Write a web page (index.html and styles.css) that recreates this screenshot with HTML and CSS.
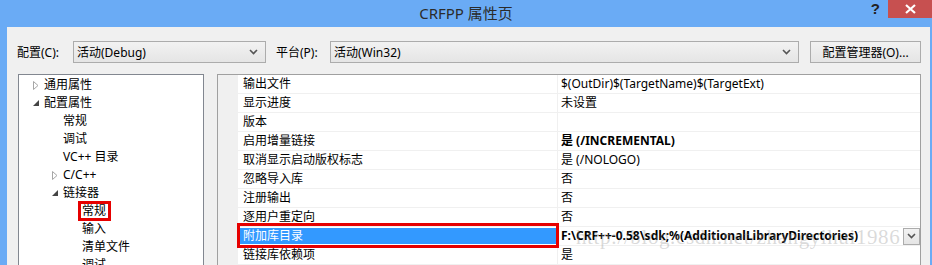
FILE: index.html
```html
<!DOCTYPE html>
<html lang="zh-CN">
<head>
  <meta charset="UTF-8">
  <title>CRFPP 属性页</title>
  <link rel="stylesheet" href="styles.css">
</head>
<body>

  <div class="window">
    <!-- Title bar -->
    <div class="titlebar">
      <div></div>
      <div class="title">CRFPP 属性页</div>
      <div class="controls">
        <span class="help">?</span>
        <span class="close">
          <svg width="11" height="10" viewBox="0 0 11 10"><path d="M1 1 L10 9 M10 1 L1 9" stroke="#fff" stroke-width="2.2"/></svg>
        </span>
      </div>
    </div>

    <div class="content">
      <!-- Config / platform row -->
      <div class="toolbar">
        <label class="lbl">配置(C):</label>
        <div class="combo combo-config">
          <span>活动(Debug)</span>
          <svg class="chev" width="9" height="6" viewBox="0 0 9 6"><path d="M1 1 L4.5 4.5 L8 1" fill="none" stroke="#555" stroke-width="1.6"/></svg>
        </div>
        <label class="lbl lbl-platform">平台(P):</label>
        <div class="combo combo-platform">
          <span>活动(Win32)</span>
          <svg class="chev" width="9" height="6" viewBox="0 0 9 6"><path d="M1 1 L4.5 4.5 L8 1" fill="none" stroke="#555" stroke-width="1.6"/></svg>
        </div>
        <button class="btn">配置管理器(O)...</button>
      </div>

      <div class="main">
        <!-- Tree -->
        <ul class="tree">
          <li class="lvl1"><span class="arrow"><svg width="6" height="9" viewBox="0 0 6 9"><path d="M0.5 0.5 L5 4.5 L0.5 8.5 Z" fill="none" stroke="#a6a6a6"/></svg></span>通用属性</li>
          <li class="lvl1"><span class="arrow"><svg width="6" height="6" viewBox="0 0 6 6"><path d="M6 0 L6 6 L0 6 Z" fill="#444"/></svg></span>配置属性</li>
          <li class="lvl2"><span class="arrow"></span>常规</li>
          <li class="lvl2"><span class="arrow"></span>调试</li>
          <li class="lvl2"><span class="arrow"></span>VC++ 目录</li>
          <li class="lvl2"><span class="arrow"><svg width="6" height="9" viewBox="0 0 6 9"><path d="M0.5 0.5 L5 4.5 L0.5 8.5 Z" fill="none" stroke="#a6a6a6"/></svg></span>C/C++</li>
          <li class="lvl2"><span class="arrow"><svg width="6" height="6" viewBox="0 0 6 6"><path d="M6 0 L6 6 L0 6 Z" fill="#444"/></svg></span>链接器</li>
          <li class="lvl3"><span class="arrow"></span><span class="marked">常规</span></li>
          <li class="lvl3"><span class="arrow"></span>输入</li>
          <li class="lvl3"><span class="arrow"></span>清单文件</li>
          <li class="lvl3"><span class="arrow"></span>调试</li>
        </ul>

        <!-- Property grid -->
        <div class="grid">
          <div class="row"><div class="gutter"></div><div class="name">输出文件</div><div class="value">$(OutDir)$(TargetName)$(TargetExt)</div></div>
          <div class="row"><div class="gutter"></div><div class="name">显示进度</div><div class="value">未设置</div></div>
          <div class="row"><div class="gutter"></div><div class="name">版本</div><div class="value"></div></div>
          <div class="row"><div class="gutter"></div><div class="name">启用增量链接</div><div class="value bold">是 (/INCREMENTAL)</div></div>
          <div class="row"><div class="gutter"></div><div class="name">取消显示启动版权标志</div><div class="value">是 (/NOLOGO)</div></div>
          <div class="row"><div class="gutter"></div><div class="name">忽略导入库</div><div class="value">否</div></div>
          <div class="row"><div class="gutter"></div><div class="name">注册输出</div><div class="value">否</div></div>
          <div class="row"><div class="gutter"></div><div class="name">逐用户重定向</div><div class="value">否</div></div>
          <div class="row selected"><div class="gutter"></div><div class="name">附加库目录</div><div class="value bold">F:\CRF++-0.58\sdk;%(AdditionalLibraryDirectories)<span class="drop"><svg width="9" height="6" viewBox="0 0 9 6"><path d="M1 1 L4.5 4.5 L8 1" fill="none" stroke="#555" stroke-width="1.6"/></svg></span></div></div>
          <div class="row"><div class="gutter"></div><div class="name">链接库依赖项</div><div class="value">是</div></div>
          <div class="watermark">http://blog.csdn.net/zhangyihui1986</div>
        </div>
      </div>
    </div>
  </div>

</body>
</html>
```

FILE: styles.css
```css
body {
  margin: 0;
  overflow: hidden;
  font-family: "Noto Sans", "Noto Sans CJK SC", sans-serif;
  font-size: 12px;
  color: #000;
  background: #6aabf5;
}

.window {
  height: 265px;
  display: flex;
  flex-direction: column;
}

.titlebar {
  height: 27px;
  display: grid;
  grid-template-columns: 1fr auto 1fr;
  background: #6aabf5;
}

.title {
  font-size: 15px;
  color: #2b2b2b;
  line-height: 26px;
}

.controls {
  display: flex;
  justify-content: flex-end;
  align-items: flex-start;
}

.help {
  font-family: "Liberation Sans", sans-serif;
  font-weight: bold;
  font-size: 15px;
  color: #222;
  line-height: 18px;
  margin-right: 8px;
}

.close {
  width: 44px;
  height: 18px;
  background: #c75050;
  display: flex;
  align-items: center;
  justify-content: center;
}

.content {
  flex: 1;
  margin: 0 2px 0 7px;
  background: #f0f0f0;
  overflow: hidden;
}

.toolbar {
  display: flex;
  align-items: center;
  height: 22px;
  margin-top: 14px;
  padding-left: 10px;
}

.lbl {
  width: 56px;
}

.lbl-platform {
  width: 54px;
  margin-left: 10px;
}

.combo {
  height: 22px;
  border: 1px solid #acacac;
  background: linear-gradient(#f2f2f2, #e5e5e5);
  display: flex;
  align-items: center;
  justify-content: space-between;
  padding: 0 7px 0 3px;
  box-sizing: border-box;
}

.combo-config {
  width: 193px;
}

.combo-platform {
  width: 469px;
}

.btn {
  margin-left: 11px;
  width: 111px;
  height: 22px;
  border: 1px solid #acacac;
  background: linear-gradient(#f2f2f2, #e5e5e5);
  font-family: inherit;
  font-size: 12px;
  padding: 0;
  color: #000;
}

.main {
  display: flex;
  margin-top: 11px;
  padding-left: 11px;
  gap: 13px;
}

.tree {
  list-style: none;
  margin: 0;
  padding: 1px 0 0;
  width: 184px;
  height: 200px;
  background: #fff;
  border: 1px solid #828790;
  border-bottom: none;
}

.tree li {
  height: 18px;
  line-height: 18px;
  display: flex;
  align-items: center;
  white-space: nowrap;
}

.arrow {
  width: 11px;
  display: flex;
  align-items: center;
}

.lvl1 { padding-left: 14px; }
.lvl2 { padding-left: 33px; }
.lvl3 { padding-left: 52px; }

.marked {
  position: relative;
}

.marked::after {
  content: "";
  position: absolute;
  left: -4px;
  right: -5px;
  top: -1px;
  bottom: -1px;
  border: 3px solid #e60000;
}

.grid {
  position: relative;
  width: 702px;
  height: 200px;
  background: #fff;
  border: 1px solid #a0a0a0;
  border-bottom: none;
  overflow: hidden;
}

.row {
  display: grid;
  grid-template-columns: 20px 320px 1fr;
  height: 19px;
}

.gutter {
  background: #f0f0f0;
}

.name,
.value {
  line-height: 18px;
  border-bottom: 1px solid #f0f0f0;
  white-space: nowrap;
}

.name {
  padding-left: 5px;
  border-right: 1px solid #f0f0f0;
}

.value {
  padding-left: 3px;
  display: flex;
  align-items: center;
}

.bold {
  font-weight: bold;
}

.selected .name {
  position: relative;
  background: #3399ff;
  color: #fff;
  box-shadow: inset 0 0 0 1px #fff;
}

.selected .name::after {
  content: "";
  position: absolute;
  left: -1px;
  right: -2px;
  top: -4px;
  bottom: -3px;
  border: 3px solid #e60000;
}

.drop {
  margin-left: auto;
  width: 15px;
  height: 15px;
  border: 1px solid #acacac;
  background: linear-gradient(#f2f2f2, #e5e5e5);
  display: flex;
  align-items: center;
  justify-content: center;
}

.watermark {
  position: absolute;
  left: 358px;
  top: 150px;
  font-family: "Liberation Serif", serif;
  font-size: 21px;
  color: rgba(150, 150, 150, 0.35);
  white-space: nowrap;
  letter-spacing: 0.6px;
  pointer-events: none;
}
```
